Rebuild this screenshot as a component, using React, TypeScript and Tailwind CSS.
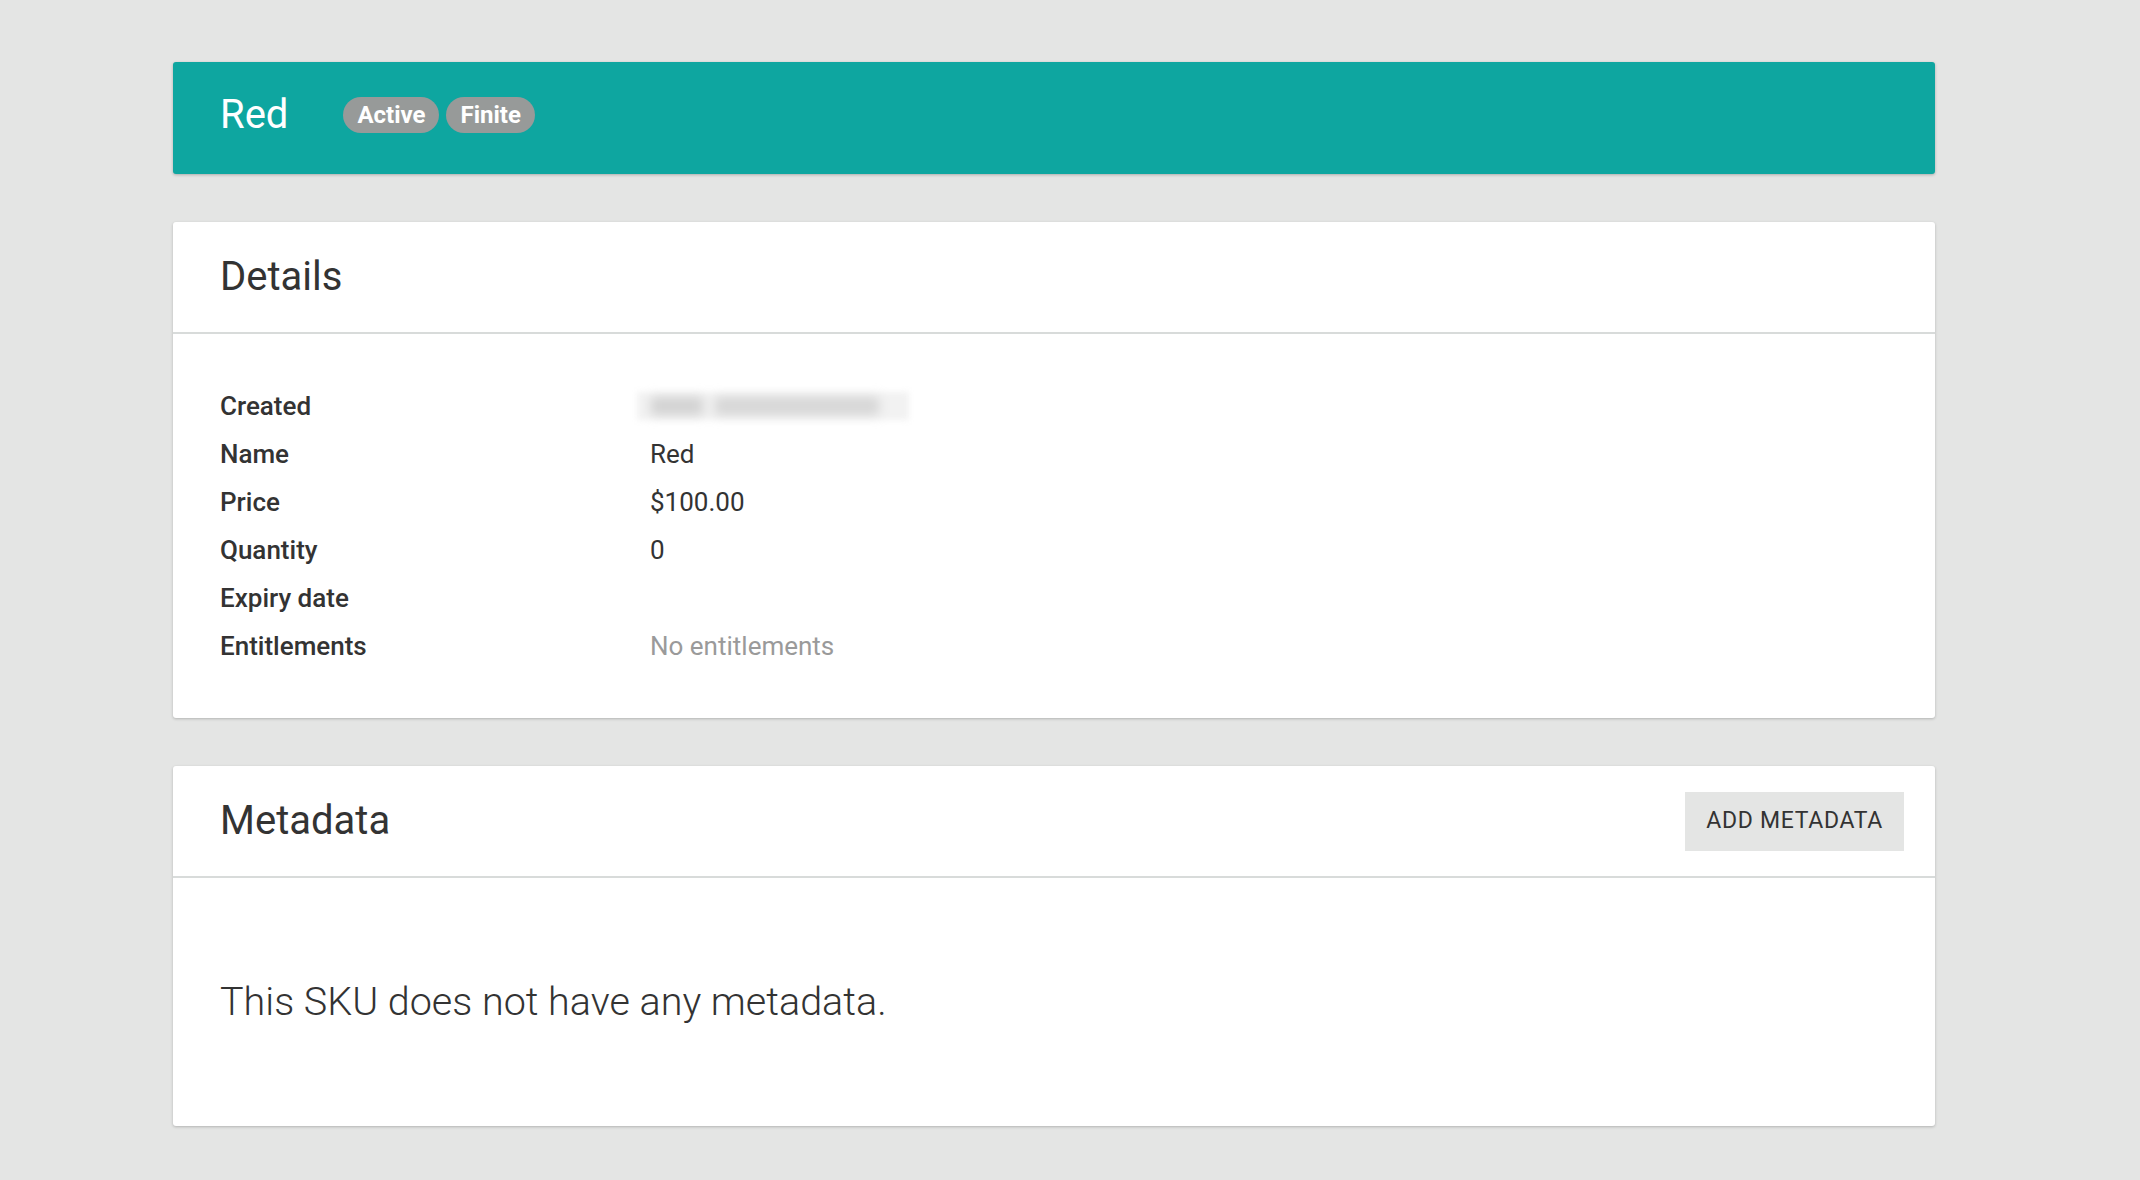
import React from 'react';

const rows: { label: string; value?: string; muted?: boolean; blurred?: boolean }[] = [
  { label: 'Created', blurred: true },
  { label: 'Name', value: 'Red' },
  { label: 'Price', value: '$100.00' },
  { label: 'Quantity', value: '0' },
  { label: 'Expiry date', value: '' },
  { label: 'Entitlements', value: 'No entitlements', muted: true },
];

function Card({ children }: { children: React.ReactNode }) {
  return (
    <div className="bg-white rounded-[3px] shadow-[0_1px_3px_rgba(0,0,0,0.22)]">
      {children}
    </div>
  );
}

function Badge({ children }: { children: React.ReactNode }) {
  return (
    <span className="inline-flex items-center h-[36px] px-[14px] rounded-full bg-[#979a99] text-white text-[24px] font-bold leading-none">
      {children}
    </span>
  );
}

export default function App() {
  return (
    <div
      className="min-h-screen bg-[#e4e5e4] pt-[62px] pb-[54px] pl-[173px] text-[#333]"
      style={{ fontFamily: 'Roboto, "Noto Sans", sans-serif' }}
    >
      <div className="w-[1762px] flex flex-col gap-[48px]">
        {/* Title bar */}
        <div className="h-[112px] bg-[#0ea6a0] rounded-[3px] shadow-[0_1px_3px_rgba(0,0,0,0.25)] flex items-center px-[47px] pb-[6px]">
          <h1 className="text-[40px] text-white font-normal leading-none">Red</h1>
          <div className="ml-[55px] flex items-center gap-[7px]">
            <Badge>Active</Badge>
            <Badge>Finite</Badge>
          </div>
        </div>

        {/* Details */}
        <Card>
          <div className="h-[112px] flex items-center px-[47px] border-b-2 border-[#d8dbda]">
            <h2 className="text-[40px] font-normal leading-none">Details</h2>
          </div>
          <div className="px-[47px] py-[48px]">
            {rows.map((r) => (
              <div key={r.label} className="flex items-center h-[48px] text-[26px]">
                <div className="w-[430px] font-medium">{r.label}</div>
                {r.blurred ? (
                  <div className="-ml-[13px] w-[272px] h-[28px] bg-[#f2f2f2] blur-[3px] flex items-center px-[14px] gap-[12px]">
                    <div className="w-[52px] h-[18px] bg-[#d2d2d2] blur-[4px]" />
                    <div className="w-[164px] h-[18px] bg-[#d6d6d6] blur-[4px]" />
                  </div>
                ) : (
                  <div className={r.muted ? 'text-[#9a9a9a]' : 'text-[#333]'}>{r.value}</div>
                )}
              </div>
            ))}
          </div>
        </Card>

        {/* Metadata */}
        <Card>
          <div className="h-[112px] flex items-center justify-between pl-[47px] pr-[31px] border-b-2 border-[#d8dbda]">
            <h2 className="text-[40px] font-normal leading-none">Metadata</h2>
            <button className="h-[59px] px-[21px] bg-[#e4e5e4] text-[23px] tracking-[0.03em] text-[#333] uppercase">
              Add metadata
            </button>
          </div>
          <div className="px-[47px] py-[96px]">
            <p className="text-[39.5px] font-light leading-[56px] text-[#333]">
              This SKU does not have any metadata.
            </p>
          </div>
        </Card>
      </div>
    </div>
  );
}
